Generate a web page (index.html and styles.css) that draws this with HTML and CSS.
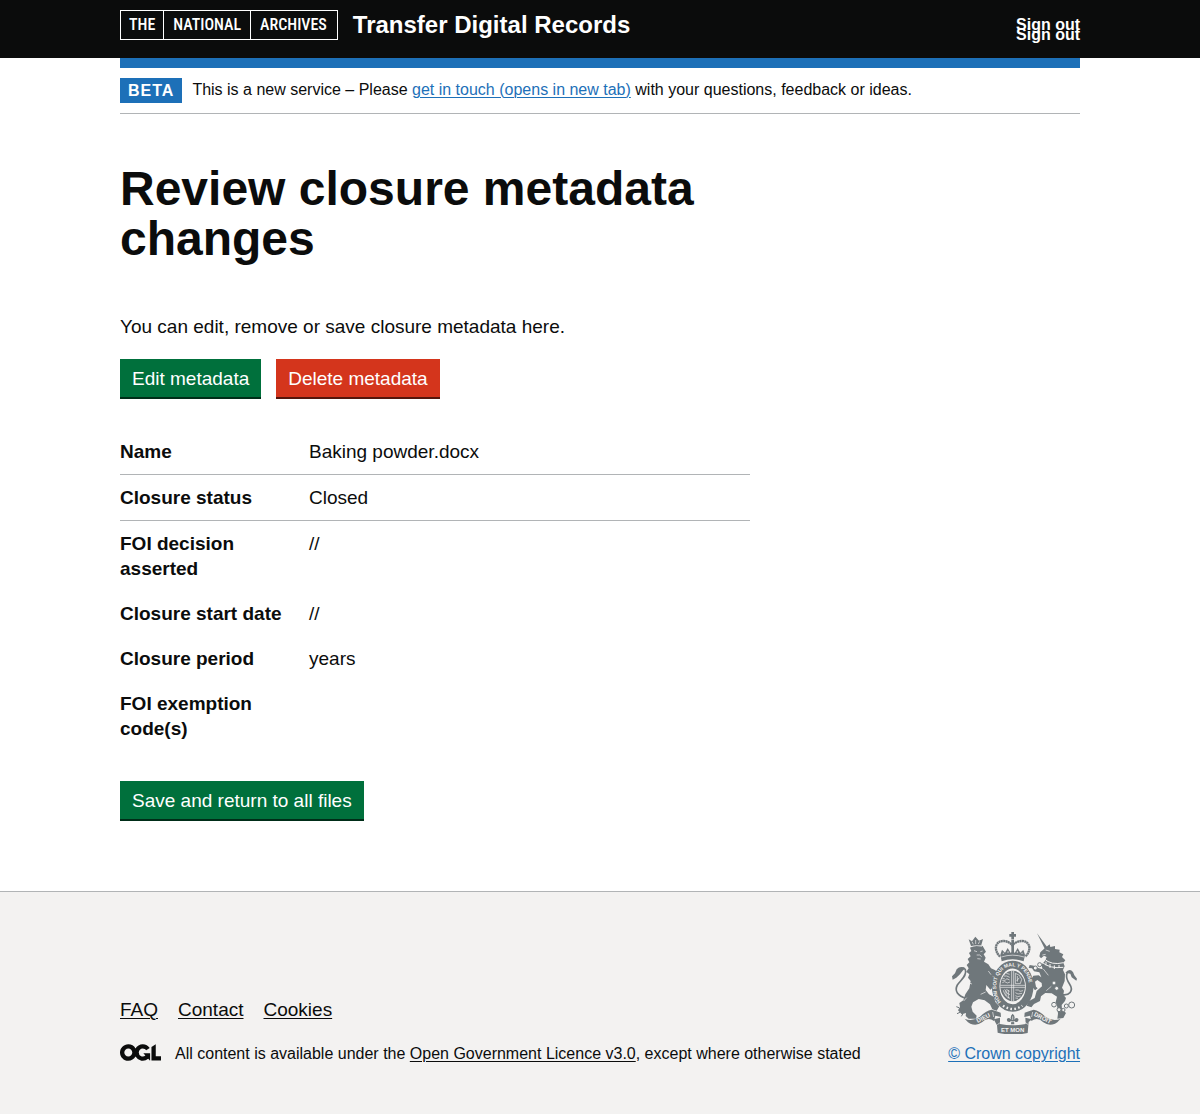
FILE: index.html
```html
<!DOCTYPE html>
<html lang="en">
<head>
<meta charset="utf-8">
<meta name="viewport" content="width=device-width, initial-scale=1">
<title>Review closure metadata changes</title>
<link rel="stylesheet" href="styles.css">
</head>
<body>
<header class="header">
  <div class="container header-inner">
    <a class="logo" href="#"><span>THE</span><span>NATIONAL</span><span>ARCHIVES</span></a>
    <a class="service" href="#">Transfer Digital Records</a>
    <nav class="account">
      <a href="#">Sign out</a>
      <a href="#">Sign out</a>
    </nav>
  </div>
</header>
<div class="container">
  <div class="phase">
    <strong class="tag">BETA</strong>
    <span>This is a new service – Please <a href="#">get in touch (opens in new tab)</a> with your questions, feedback or ideas.</span>
  </div>
  <main class="main">
    <h1>Review closure metadata changes</h1>
    <p>You can edit, remove or save closure metadata here.</p>
    <div class="actions">
      <button class="button" type="button">Edit metadata</button>
      <button class="button warning" type="button">Delete metadata</button>
    </div>
    <dl class="summary">
      <div class="row ruled"><dt>Name</dt><dd>Baking powder.docx</dd></div>
      <div class="row ruled"><dt>Closure status</dt><dd>Closed</dd></div>
      <div class="row"><dt>FOI decision asserted</dt><dd>//</dd></div>
      <div class="row"><dt>Closure start date</dt><dd>//</dd></div>
      <div class="row"><dt>Closure period</dt><dd>years</dd></div>
      <div class="row"><dt>FOI exemption code(s)</dt><dd></dd></div>
    </dl>
    <button class="button" type="submit">Save and return to all files</button>
  </main>
</div>
<footer class="footer">
  <div class="container footer-inner">
    <div class="footer-meta">
      <ul class="links">
        <li><a href="#">FAQ</a></li>
        <li><a href="#">Contact</a></li>
        <li><a href="#">Cookies</a></li>
      </ul>
      <div class="licence">
        <svg class="ogl" role="img" aria-label="OGL" viewBox="0 0 483.2 195.7" width="41" height="17"><path fill="currentColor" d="M421.5 142.8V.1l-50.7 32.3v161.1h112.4v-50.7zm-122.3-9.6A47.12 47.12 0 0 1 221 97.8c0-26 21.1-47.1 47.1-47.1 16.7 0 31.4 8.7 39.7 21.8l42.7-27.2A97.63 97.63 0 0 0 268.1 0c-36.5 0-68.3 20.1-85.1 49.7A98 98 0 0 0 97.8 0C43.9 0 0 43.9 0 97.8s43.9 97.8 97.8 97.8c36.5 0 68.3-20.1 85.1-49.7a97.76 97.76 0 0 0 149.6 25.4l19.4 22.2h3v-87.8h-80l24.3 27.5zM97.8 145c-26 0-47.1-21.1-47.1-47.1s21.1-47.1 47.1-47.1 47.1 21.1 47.1 47.1S123.8 145 97.8 145"/></svg>
        <span>All content is available under the <a href="#">Open Government Licence v3.0</a>, except where otherwise stated</span>
      </div>
    </div>
    <a class="copyright" href="#">
      <svg class="crest" viewBox="36 21 375 306" width="125" height="102" aria-hidden="true">
        <!-- lion -->
        <path d="M90 68Q108 57 128 63L138 80 131 88 137 98 132 110 145 118 153 130 166 136 178 150 168 160 158 152 162 168 160 186 151 194 139 180 137 195 147 208 162 216 166 231 178 244 170 257 157 253 150 238 134 226 116 222 99 232 94 245 98 260 110 272 108 281 86 281 77 273 78 264 65 268 54 256 60 245 58 234 70 226 76 208 88 190 92 168 84 158 88 148 79 140 86 130 80 120 88 112 83 102 92 94 87 84 94 78Z"/>
        <path class="tail" d="M80 220C52 213 43 197 52 180C61 166 83 151 76 134C70 124 59 131 50 147"/>
        <path d="M76 130Q61 121 50 133L45 145 36 154 38 164 49 158 60 148 68 137Z"/>
        <path d="M93 63 86 43 96 49 106 35 117 47 129 42 124 60Z"/>
        <path class="cut" d="M96 50l4 8M107 45v12M119 49l-4 8M94 65q16-6 32-1"/>
        <path class="cut" d="M102 77l9 3M121 80l7-2M110 90l9 0 6 5M112 101l10 1M84 173l12 4M145 138l8 11M122 208l15-7M80 218l-9 10"/>
        <path class="thin" d="M60 262l-9 4M69 266l-5 8M57 248l-8-3"/>
        <!-- unicorn -->
        <path d="M291 25 323 68 315 73Z"/>
        <path d="M315 69 329 58 331 66 345 63 345 72 359 74 358 82 370 88 366 96 376 106 370 113 374 124 369 135 375 148 374 168 366 188 372 197 370 209 378 219 375 228 365 240 366 253 378 264 370 279 352 281 354 266 352 246 347 231 351 215 335 205 316 204 303 214 300 228 282 237 274 247 260 242 266 229 284 219 290 198 306 184 305 174 292 165 285 170 288 185 293 190 285 196 275 183 273 164 280 152 296 151 304 157 298 142 282 139 276 130 266 129 269 120 282 122 292 128 308 133 304 119 314 109 320 96 312 92 303 100 298 94 301 82Z"/>
        <path class="tail" d="M361 208C390 215 401 196 389 178C374 155 378 137 394 140"/>
        <path d="M376 143Q388 128 399 141L403 151 411 161 409 167 395 157 391 146Z"/>
        <path class="cut" d="M306 112Q330 132 370 127M312 101Q334 122 371 113M318 110v11M330 117v12M343 121v11M357 120v9" stroke-width="3"/>
        <path class="cut" d="M317 75l12 4M307 90l10-2M310 132l15 19M319 197l15-13"/>
        <g class="ring"><circle cx="299" cy="119" r="6"/><circle cx="286" cy="129" r="6"/><circle cx="342" cy="174" r="6"/><circle cx="350" cy="190" r="6"/><circle cx="342" cy="239" r="7"/><circle cx="357" cy="254" r="6"/><circle cx="370" cy="255" r="5"/><circle cx="379" cy="243" r="6"/><circle cx="395" cy="240" r="9"/></g>
        <!-- crown -->
        <path d="M214 21h8v6h6v8h-6v8h-8v-8h-6v-8h6Z"/>
        <path class="arch" d="M180 95C158 72 168 47 191 48Q207 49 217 61Q228 49 244 48C268 47 278 72 256 95"/>
        <path d="M214 44h8v47h-8ZM181 89l5-15 9 9 8-14 9 15 6-8 6 8 9-15 8 14 9-9 5 15-4 20Q218 97 185 109Z"/>
        <path class="cut" d="M184 96Q218 85 252 96M190 83v4M204 78v6M232 78v6M246 83v4"/>
        <!-- garter -->
        <ellipse class="band" cx="218" cy="184" rx="51" ry="65"/>
        <path id="garter" d="M183 231C158 202 163 125 218 124C273 125 278 202 253 231" fill="none"/>
        <text class="motto garter-text"><textPath href="#garter">HONI SOIT QUI MAL Y PENSE</textPath></text>
        <path class="cut" d="M189 242Q218 262 247 242" stroke-width="7" stroke-dasharray="5 7"/>
        <!-- quartered shield -->
        <ellipse class="shield" cx="218" cy="183" rx="37" ry="46"/>
        <path class="cut" d="M215 138v90M221 138v90M181 181h74M181 187h74"/>
        <path class="cut" d="M187 166h9l4-5 9 4M187 173l7-3 8 4 8-3M192 153h8l9 4M199 145l10 3M186 159l8 2M226 145q15 3 19 18l-4 13h-15ZM232 153v17M238 158l-8 10M190 196q5 19 20 24M194 193q6 15 16 16M199 193l10 6M198 196v17M205 196v24M226 195h9l5 4 9-2M226 203l8 4 12-2M226 212l7 3 9-2M226 219l8 1"/>
        <!-- ribbons -->
        <path d="M74 281Q96 291 119 276 138 256 155 254 166 257 182 263L183 276 166 272 162 288Q143 275 126 292 110 304 91 296L84 292Z"/>
        <path d="M362 281Q340 291 317 276 298 256 281 254 270 257 254 263L253 276 270 272 274 288Q293 275 310 292 326 304 345 296L352 292Z"/>
        <path d="M161 283L180 278 180 297Q218 305 257 297L256 278 276 283 266 291 263 324Q218 334 173 323L171 301Z"/>
        <path class="cut" d="M172 299L182 292M265 299L255 292M158 261L161 276M278 261L275 276"/>
        <!-- fleur-de-lis -->
        <path d="M218 266q10 9 3 20 8-12 14-4 2 10-8 9l-5-3 1 10h-10l1-10-5 3q-10 1-8-9 6-8 14 4-7-11 3-20Z"/>
        <path class="cut" d="M218 274v11M212 290h12" stroke-width="2"/>
        <g class="motto" text-anchor="middle">
          <text x="130" y="285" transform="rotate(-27 130 279)">DIEU</text>
          <text x="218" y="321">ET MON</text>
          <text x="308" y="285" transform="rotate(27 308 279)">DROIT</text>
        </g>
      </svg>
      <span>© Crown copyright</span>
    </a>
  </div>
</footer>
</body>
</html>
```
FILE: styles.css
```css
* { box-sizing: border-box; }
html { background: #f3f2f1; }
body {
  margin: 0;
  background: #fff;
  color: #0b0c0c;
  font-family: "Liberation Sans", Arial, sans-serif;
  font-size: 19px;
  line-height: 25px;
}
h1, p, dl, dd, ul { margin: 0; padding: 0; }
a { color: #1d70b8; text-underline-offset: 2px; text-decoration-thickness: 1px; }
.container { max-width: 960px; margin: 0 auto; }

.header { background: #0b0c0c; }
.header-inner {
  display: flex;
  align-items: flex-start;
  gap: 15px;
  padding: 10px 0 8px;
}
.header a { color: #fff; text-decoration: none; font-weight: 700; }
.header .logo {
  display: flex;
  margin-bottom: 10px;
  border: 1px solid #fff;
  font: 500 16px/28px "Roboto Condensed", Roboto, sans-serif;
}
.logo span { padding: 0 9px; }
.logo span:first-child { padding: 0 8px; }
.logo span + span { border-left: 1px solid #fff; }
.logo span:last-child { padding-right: 10px; }
.service { font-size: 24px; line-height: 30px; }
.account {
  display: flex;
  flex-direction: column;
  margin: 10px 0 0 auto;
  font-size: 16px;
  line-height: 10px;
}

.phase {
  display: flex;
  align-items: center;
  gap: 10px;
  padding: 10px 0;
  border-top: 10px solid #1d70b8;
  border-bottom: 1px solid #b1b4b6;
  font-size: 16px;
  line-height: 20px;
}
.phase span { padding-bottom: 2px; }
.tag {
  padding: 5px 8px 4px;
  background: #1d70b8;
  color: #fff;
  line-height: 16px;
  letter-spacing: 1px;
}

.main { max-width: 630px; padding: 50px 0 70px; }
h1 { margin-bottom: 50px; font-size: 48px; line-height: 50px; }
.actions { display: flex; gap: 15px; margin: 20px 0 30px; }
.button {
  display: block;
  padding: 10px 12px 9px;
  border: 0;
  border-bottom: 2px solid #002d18;
  background: #00703c;
  color: #fff;
  font: inherit;
  line-height: 19px;
}
.warning { background: #d4351c; border-color: #55150b; }
.summary { margin-bottom: 30px; }
.row { display: grid; grid-template-columns: 30% 1fr; padding: 10px 0; }
.ruled { border-bottom: 1px solid #b1b4b6; }
dt { padding-right: 20px; font-weight: 700; }

.footer { padding: 40px 0 50px; border-top: 1px solid #b1b4b6; background: #f3f2f1; font-size: 16px; line-height: 20px; }
.footer-inner { display: flex; justify-content: space-between; align-items: flex-end; }
.footer-meta a { color: #0b0c0c; }
.links { display: flex; gap: 20px; margin-bottom: 22px; list-style: none; font-size: 19px; line-height: 25px; }
.licence { display: flex; gap: 14px; }
.ogl { display: block; }
.copyright { display: flex; flex-direction: column; align-items: flex-end; gap: 10px; }
.crest { display: block; margin-right: 3px; color: #6f777b; fill: currentColor; }
.crest .cut { fill: none; stroke: #f3f2f1; }
.crest .cut:not([stroke-width]) { stroke-width: 2px; }
.crest .tail { fill: none; stroke: currentColor; stroke-width: 5px; }
.crest .thin { fill: none; stroke: currentColor; stroke-width: 3px; }
.crest .arch { fill: none; stroke: currentColor; stroke-width: 7px; stroke-dasharray: 6px 1px; }
.crest .band { fill: none; stroke: currentColor; stroke-width: 23px; }
.crest .ring { fill: #f3f2f1; stroke: currentColor; stroke-width: 3px; }
.crest .motto { fill: #f3f2f1; font-size: 18px; font-weight: 700; }
.crest .garter-text { font-size: 15px; }
```
